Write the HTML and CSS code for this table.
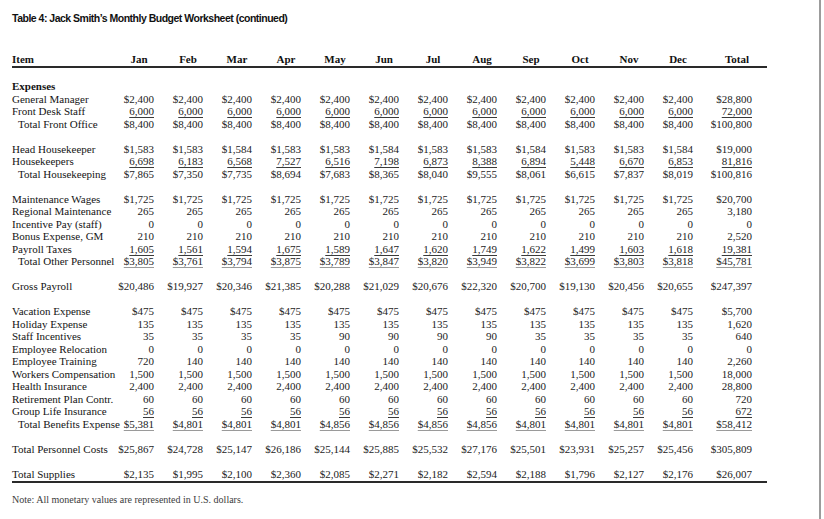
FILE: index.html
```html
<!DOCTYPE html>
<html>
<head>
<meta charset="utf-8">
<link rel="stylesheet" href="styles.css">
</head>
<body>
<div class="page">
<h1 class="title">Table 4: Jack Smith’s Monthly Budget Worksheet (continued)</h1>
<table class="budget">
<colgroup>
<col class="c-label"><col class="c-m"><col class="c-m"><col class="c-m"><col class="c-m"><col class="c-m"><col class="c-m"><col class="c-m"><col class="c-m"><col class="c-m"><col class="c-m"><col class="c-m"><col class="c-m"><col class="c-total"><col class="c-pad">
</colgroup>
<thead>
<tr>
<th class="lbl">Item</th>
<th><span>Jan</span></th><th><span>Feb</span></th><th><span>Mar</span></th><th><span>Apr</span></th><th><span>May</span></th><th><span>Jun</span></th><th><span>Jul</span></th><th><span>Aug</span></th><th><span>Sep</span></th><th><span>Oct</span></th><th><span>Nov</span></th><th><span>Dec</span></th><th><span>Total</span></th><th></th>
</tr>
</thead>
<tbody>
<tr class="gap"><td colspan="15"></td></tr>
<tr><td class="lbl head" colspan="15">Expenses</td></tr>
<tr><td class="lbl">General Manager</td><td>$2,400</td><td>$2,400</td><td>$2,400</td><td>$2,400</td><td>$2,400</td><td>$2,400</td><td>$2,400</td><td>$2,400</td><td>$2,400</td><td>$2,400</td><td>$2,400</td><td>$2,400</td><td>$28,800</td><td></td></tr>
<tr class="ul"><td class="lbl">Front Desk Staff</td><td><u>6,000</u></td><td><u>6,000</u></td><td><u>6,000</u></td><td><u>6,000</u></td><td><u>6,000</u></td><td><u>6,000</u></td><td><u>6,000</u></td><td><u>6,000</u></td><td><u>6,000</u></td><td><u>6,000</u></td><td><u>6,000</u></td><td><u>6,000</u></td><td><u>72,000</u></td><td></td></tr>
<tr><td class="lbl ind">Total Front Office</td><td>$8,400</td><td>$8,400</td><td>$8,400</td><td>$8,400</td><td>$8,400</td><td>$8,400</td><td>$8,400</td><td>$8,400</td><td>$8,400</td><td>$8,400</td><td>$8,400</td><td>$8,400</td><td>$100,800</td><td></td></tr>
<tr class="gap"><td colspan="15"></td></tr>
<tr><td class="lbl">Head Housekeeper</td><td>$1,583</td><td>$1,583</td><td>$1,584</td><td>$1,583</td><td>$1,583</td><td>$1,584</td><td>$1,583</td><td>$1,583</td><td>$1,584</td><td>$1,583</td><td>$1,583</td><td>$1,584</td><td>$19,000</td><td></td></tr>
<tr><td class="lbl">Housekeepers</td><td><u>6,698</u></td><td><u>6,183</u></td><td><u>6,568</u></td><td><u>7,527</u></td><td><u>6,516</u></td><td><u>7,198</u></td><td><u>6,873</u></td><td><u>8,388</u></td><td><u>6,894</u></td><td><u>5,448</u></td><td><u>6,670</u></td><td><u>6,853</u></td><td><u>81,816</u></td><td></td></tr>
<tr><td class="lbl ind">Total Housekeeping</td><td>$7,865</td><td>$7,350</td><td>$7,735</td><td>$8,694</td><td>$7,683</td><td>$8,365</td><td>$8,040</td><td>$9,555</td><td>$8,061</td><td>$6,615</td><td>$7,837</td><td>$8,019</td><td>$100,816</td><td></td></tr>
<tr class="gap"><td colspan="15"></td></tr>
<tr><td class="lbl">Maintenance Wages</td><td>$1,725</td><td>$1,725</td><td>$1,725</td><td>$1,725</td><td>$1,725</td><td>$1,725</td><td>$1,725</td><td>$1,725</td><td>$1,725</td><td>$1,725</td><td>$1,725</td><td>$1,725</td><td>$20,700</td><td></td></tr>
<tr><td class="lbl">Regional Maintenance</td><td>265</td><td>265</td><td>265</td><td>265</td><td>265</td><td>265</td><td>265</td><td>265</td><td>265</td><td>265</td><td>265</td><td>265</td><td>3,180</td><td></td></tr>
<tr><td class="lbl">Incentive Pay (staff)</td><td>0</td><td>0</td><td>0</td><td>0</td><td>0</td><td>0</td><td>0</td><td>0</td><td>0</td><td>0</td><td>0</td><td>0</td><td>0</td><td></td></tr>
<tr><td class="lbl">Bonus Expense, GM</td><td>210</td><td>210</td><td>210</td><td>210</td><td>210</td><td>210</td><td>210</td><td>210</td><td>210</td><td>210</td><td>210</td><td>210</td><td>2,520</td><td></td></tr>
<tr><td class="lbl">Payroll Taxes</td><td><u>1,605</u></td><td><u>1,561</u></td><td><u>1,594</u></td><td><u>1,675</u></td><td><u>1,589</u></td><td><u>1,647</u></td><td><u>1,620</u></td><td><u>1,749</u></td><td><u>1,622</u></td><td><u>1,499</u></td><td><u>1,603</u></td><td><u>1,618</u></td><td><u>19,381</u></td><td></td></tr>
<tr><td class="lbl ind">Total Other Personnel</td><td><u class="lt">$3,805</u></td><td><u class="lt">$3,761</u></td><td><u class="lt">$3,794</u></td><td><u class="lt">$3,875</u></td><td><u class="lt">$3,789</u></td><td><u class="lt">$3,847</u></td><td><u class="lt">$3,820</u></td><td><u class="lt">$3,949</u></td><td><u class="lt">$3,822</u></td><td><u class="lt">$3,699</u></td><td><u class="lt">$3,803</u></td><td><u class="lt">$3,818</u></td><td><u class="lt">$45,781</u></td><td></td></tr>
<tr class="gap"><td colspan="15"></td></tr>
<tr><td class="lbl">Gross Payroll</td><td>$20,486</td><td>$19,927</td><td>$20,346</td><td>$21,385</td><td>$20,288</td><td>$21,029</td><td>$20,676</td><td>$22,320</td><td>$20,700</td><td>$19,130</td><td>$20,456</td><td>$20,655</td><td>$247,397</td><td></td></tr>
<tr class="gap"><td colspan="15"></td></tr>
<tr><td class="lbl">Vacation Expense</td><td>$475</td><td>$475</td><td>$475</td><td>$475</td><td>$475</td><td>$475</td><td>$475</td><td>$475</td><td>$475</td><td>$475</td><td>$475</td><td>$475</td><td>$5,700</td><td></td></tr>
<tr><td class="lbl">Holiday Expense</td><td>135</td><td>135</td><td>135</td><td>135</td><td>135</td><td>135</td><td>135</td><td>135</td><td>135</td><td>135</td><td>135</td><td>135</td><td>1,620</td><td></td></tr>
<tr><td class="lbl">Staff Incentives</td><td>35</td><td>35</td><td>35</td><td>35</td><td>90</td><td>90</td><td>90</td><td>90</td><td>35</td><td>35</td><td>35</td><td>35</td><td>640</td><td></td></tr>
<tr><td class="lbl">Employee Relocation</td><td>0</td><td>0</td><td>0</td><td>0</td><td>0</td><td>0</td><td>0</td><td>0</td><td>0</td><td>0</td><td>0</td><td>0</td><td>0</td><td></td></tr>
<tr><td class="lbl">Employee Training</td><td>720</td><td>140</td><td>140</td><td>140</td><td>140</td><td>140</td><td>140</td><td>140</td><td>140</td><td>140</td><td>140</td><td>140</td><td>2,260</td><td></td></tr>
<tr><td class="lbl">Workers Compensation</td><td>1,500</td><td>1,500</td><td>1,500</td><td>1,500</td><td>1,500</td><td>1,500</td><td>1,500</td><td>1,500</td><td>1,500</td><td>1,500</td><td>1,500</td><td>1,500</td><td>18,000</td><td></td></tr>
<tr><td class="lbl">Health Insurance</td><td>2,400</td><td>2,400</td><td>2,400</td><td>2,400</td><td>2,400</td><td>2,400</td><td>2,400</td><td>2,400</td><td>2,400</td><td>2,400</td><td>2,400</td><td>2,400</td><td>28,800</td><td></td></tr>
<tr><td class="lbl">Retirement Plan Contr.</td><td>60</td><td>60</td><td>60</td><td>60</td><td>60</td><td>60</td><td>60</td><td>60</td><td>60</td><td>60</td><td>60</td><td>60</td><td>720</td><td></td></tr>
<tr><td class="lbl">Group Life Insurance</td><td><u>56</u></td><td><u>56</u></td><td><u>56</u></td><td><u>56</u></td><td><u>56</u></td><td><u>56</u></td><td><u>56</u></td><td><u>56</u></td><td><u>56</u></td><td><u>56</u></td><td><u>56</u></td><td><u>56</u></td><td><u>672</u></td><td></td></tr>
<tr><td class="lbl ind">Total Benefits Expense</td><td><u class="lt">$5,381</u></td><td><u class="lt">$4,801</u></td><td><u class="lt">$4,801</u></td><td><u class="lt">$4,801</u></td><td><u class="lt">$4,856</u></td><td><u class="lt">$4,856</u></td><td><u class="lt">$4,856</u></td><td><u class="lt">$4,856</u></td><td><u class="lt">$4,801</u></td><td><u class="lt">$4,801</u></td><td><u class="lt">$4,801</u></td><td><u class="lt">$4,801</u></td><td><u class="lt">$58,412</u></td><td></td></tr>
<tr class="gap"><td colspan="15"></td></tr>
<tr><td class="lbl">Total Personnel Costs</td><td>$25,867</td><td>$24,728</td><td>$25,147</td><td>$26,186</td><td>$25,144</td><td>$25,885</td><td>$25,532</td><td>$27,176</td><td>$25,501</td><td>$23,931</td><td>$25,257</td><td>$25,456</td><td>$305,809</td><td></td></tr>
<tr class="gap"><td colspan="15"></td></tr>
<tr class="last"><td class="lbl">Total Supplies</td><td>$2,135</td><td>$1,995</td><td>$2,100</td><td>$2,360</td><td>$2,085</td><td>$2,271</td><td>$2,182</td><td>$2,594</td><td>$2,188</td><td>$1,796</td><td>$2,127</td><td>$2,176</td><td>$26,007</td><td></td></tr>
</tbody>
</table>
<p class="note">Note: All monetary values are represented in U.S. dollars.</p>
</div>
</body>
</html>
```
FILE: styles.css
```css
html, body {
  margin: 0;
  padding: 0;
  background: #ffffff;
}

.page {
  box-sizing: border-box;
  width: 821px;
  min-height: 519px;
  padding: 12px 0 0 12px;
  border-right: 2px solid #9c9c9c;
  font-family: "Liberation Serif", "Times New Roman", serif;
  color: #1c1c1c;
}

.title {
  margin: 0;
  font-family: "Liberation Sans Narrow", "Liberation Sans", Arial, sans-serif;
  font-weight: bold;
  font-size: 10.5px;
  line-height: 12px;
  letter-spacing: -0.5px;
  color: #111;
}

.budget {
  margin-top: 29px;
  width: 755px;
  table-layout: fixed;
  border-collapse: collapse;
  border-spacing: 0;
  font-size: 11px;
}

.c-label { width: 93px; }
.c-m { width: 49px; }
.c-total { width: 59px; }
.c-pad { width: 15px; }

.budget th,
.budget td {
  padding: 0;
  height: 12.5px;
  line-height: 12.5px;
  text-align: right;
  white-space: nowrap;
  overflow: visible;
  vertical-align: baseline;
}

.budget thead th {
  font-weight: bold;
  color: #111;
  border-bottom: 2px solid #2a2a2a;
}

.budget thead th span {
  display: inline-block;
  width: 30px;
  text-align: center;
}

.budget .lbl {
  text-align: left;
  color: #141414;
}

.budget .head {
  font-weight: bold;
}

.budget .ind {
  padding-left: 6px;
}

.budget u {
  text-decoration: underline;
  text-decoration-color: #3a3a3a;
  text-decoration-thickness: 1px;
  text-underline-offset: 2px;
}

.budget u.lt {
  text-decoration-color: #9a9a9a;
}

.budget tr.gap td {
  height: 12.5px;
}

.budget tr.last td {
  border-bottom: 2px solid #2a2a2a;
  padding-bottom: 1px;
}

.note {
  margin: 11px 0 0 0;
  font-size: 10px;
  line-height: 12px;
  color: #3c3c3c;
}
```
